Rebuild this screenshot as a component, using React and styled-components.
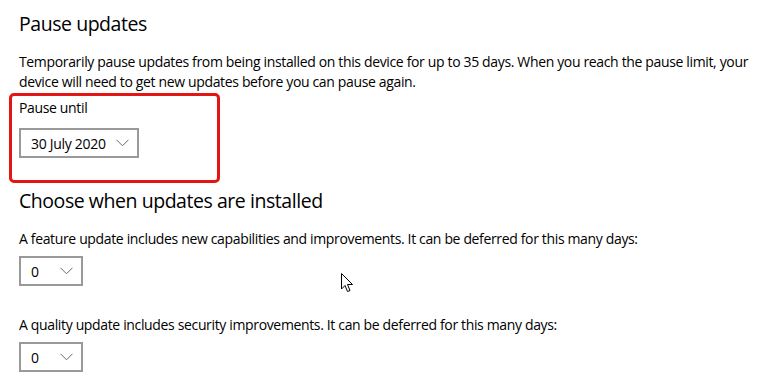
import React from "react";
import styled, { createGlobalStyle } from "styled-components";

const Global = createGlobalStyle`
  html, body { margin: 0; padding: 0; background: #fff; }
  body { font-family: "Open Sans", "Noto Sans", sans-serif; color: #000; }
`;

const Page = styled.div`
  width: 776px;
  height: 382px;
  overflow: hidden;
  box-sizing: border-box;
  padding: 10px 0 0 19px;
  position: relative;
  display: flex;
  flex-direction: column;
`;

const Title = styled.h2`
  margin: ${(p) => p.$mt || 0}px 0 0 0;
  font-size: 19.5px;
  font-weight: 400;
  line-height: 28px;
  letter-spacing: -0.45px;
`;

const Text = styled.p`
  margin: ${(p) => p.$mt || 0}px 0 0 0;
  font-size: 14px;
  line-height: 20px;
  white-space: nowrap;
  letter-spacing: -0.35px;
`;

const Highlight = styled.div`
  margin: 1px 0 0 -10px;
  width: 211px;
  height: 90px;
  box-sizing: border-box;
  border: 3px solid #e41515;
  border-radius: 5px;
  padding: 2px 0 0 7px;
  display: flex;
  flex-direction: column;
`;

const Select = styled.div`
  margin-top: ${(p) => p.$mt || 0}px;
  width: ${(p) => p.$w}px;
  height: 30px;
  box-sizing: border-box;
  border: 2px solid #999;
  display: flex;
  align-items: center;
  padding: 0 8px 0 10px;
  font-size: 14px;
  letter-spacing: -0.3px;
  justify-content: space-between;
`;

const Cursor = styled.svg`
  position: absolute;
  left: 341px;
  top: 273px;
`;

const Chevron = () => (
  <svg width="13" height="8" viewBox="0 0 13 8">
    <path d="M0.5 0.8 L6.5 6.8 L12.5 0.8" fill="none" stroke="#6a6a6a" strokeWidth="1" />
  </svg>
);

export default function App() {
  return (
    <>
      <Global />
      <Page>
        <Title>Pause updates</Title>
        <Text $mt={14}>
          Temporarily pause updates from being installed on this device for up to 35 days. When you reach the pause limit, your
          <br />
          device will need to get new updates before you can pause again.
        </Text>
        <Highlight>
          <Text>Pause until</Text>
          <Select $w={120} $mt={10}>
            <span>30 July 2020</span>
            <Chevron />
          </Select>
        </Highlight>
        <Title $mt={4}>Choose when updates are installed</Title>
        <Text $mt={14}>
          A feature update includes new capabilities and improvements. It can be deferred for this many days:
        </Text>
        <Select $w={64} $mt={7}>
          <span>0</span>
          <Chevron />
        </Select>
        <Text $mt={29}>
          A quality update includes security improvements. It can be deferred for this many days:
        </Text>
        <Select $w={64} $mt={7}>
          <span>0</span>
          <Chevron />
        </Select>
        <Cursor width="13" height="20" viewBox="0 0 13 20">
          <path d="M0.5 0.5 L0.5 16 L4 12.5 L6.5 18.5 L9 17.5 L6.5 11.5 L11.5 11.5 Z" fill="#fff" stroke="#000" strokeWidth="1" strokeLinejoin="miter" />
        </Cursor>
      </Page>
    </>
  );
}
